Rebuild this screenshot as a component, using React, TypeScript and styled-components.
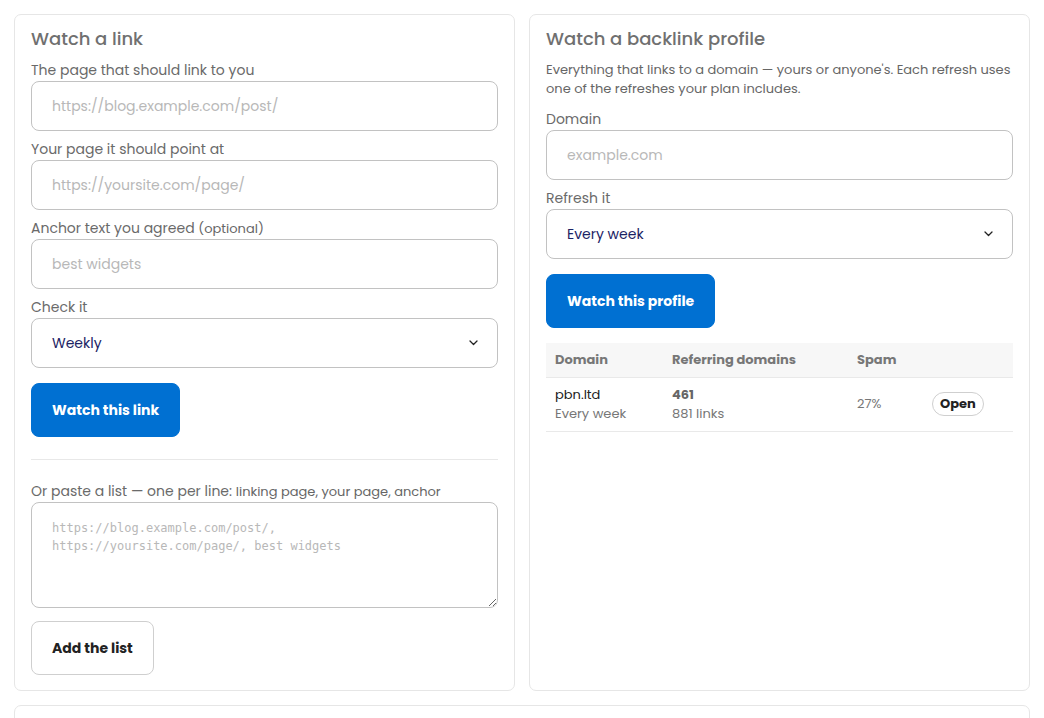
import React from 'react';
import styled, { createGlobalStyle } from 'styled-components';

const GlobalStyle = createGlobalStyle`
  * { box-sizing: border-box; }
  body {
    margin: 0;
    background: #fff;
    font-family: 'Poppins', 'Noto Sans', 'Open Sans', sans-serif;
    color: #333;
  }
`;

const Page = styled.div`
  padding: 14px;
  display: flex;
  flex-direction: column;
  gap: 14px;
`;

const Columns = styled.div`
  display: grid;
  grid-template-columns: 501px 1fr;
  gap: 14px;
`;

const Card = styled.section`
  border: 1px solid #e6e6e6;
  border-radius: 7px;
  padding: 11px 16px 15px;
  background: #fff;
`;

const EmptyCard = styled(Card)`
  height: 40px;
`;

const Title = styled.h2`
  margin: 0 0 8px;
  font-size: 18px;
  font-weight: 500;
  color: #707070;
  line-height: 26px;
`;

const Intro = styled.p`
  margin: 0 0 11px;
  font-size: 13px;
  line-height: 19px;
  color: #666;
`;

const Field = styled.div`
  display: flex;
  flex-direction: column;
  margin-bottom: 8px;
`;

const Label = styled.label`
  font-size: 14px;
  line-height: 20px;
  color: #6a6a6a;
  margin-bottom: 1px;
`;

const Hint = styled.span`
  font-size: 13px;
  line-height: 1;
  color: #666;
`;

const TextInput = styled.input`
  height: 50px;
  border: 1px solid #c2c2c2;
  border-radius: 8px;
  padding: 0 20px;
  font: inherit;
  font-size: 14px;
  color: #222;
  outline: none;
  &::placeholder { color: #b8b8b8; }
`;

const SelectBox = styled.div`
  height: 50px;
  border: 1px solid #c2c2c2;
  border-radius: 8px;
  padding: 0 19px 0 20px;
  display: flex;
  align-items: center;
  justify-content: space-between;
  font-size: 14px;
  color: #1c2364;
`;

const ListArea = styled.textarea`
  height: 106px;
  border: 1px solid #c2c2c2;
  border-radius: 8px;
  padding: 16px 20px;
  font-family: 'DejaVu Sans Mono', 'Liberation Mono', monospace;
  font-size: 12px;
  line-height: 18px;
  color: #222;
  outline: none;
  resize: vertical;
  &::placeholder { color: #b8b8b8; }
`;

const Button = styled.button<{ $primary?: boolean }>`
  height: 54px;
  padding: 0 20px;
  border-radius: 8px;
  font: inherit;
  font-size: 14px;
  font-weight: 700;
  cursor: pointer;
  border: 1px solid ${p => (p.$primary ? '#0070d2' : '#cfcfcf')};
  background: ${p => (p.$primary ? '#0070d2' : '#fff')};
  color: ${p => (p.$primary ? '#fff' : '#222')};
`;

const Actions = styled.div<{ $gap?: number }>`
  display: flex;
  margin-top: ${p => p.$gap ?? 15}px;
`;

const Divider = styled.hr`
  border: 0;
  border-top: 1px solid #e8e8e8;
  margin: 22px 0 21px;
`;

const Table = styled.table`
  width: 100%;
  border-collapse: collapse;
  margin-top: 15px;
  font-size: 13px;
`;

const Th = styled.th<{ $w?: number }>`
  text-align: left;
  background: #f7f7f7;
  color: #777;
  font-weight: 700;
  height: 34px;
  padding: 0 9px;
  border-bottom: 1px solid #e9e9e9;
  width: ${p => (p.$w ? `${p.$w}px` : 'auto')};
`;

const Td = styled.td`
  padding: 7px 9px 8px;
  border-bottom: 1px solid #e9e9e9;
  color: #777;
  line-height: 19px;
  vertical-align: middle;
`;

const Main = styled.div<{ $bold?: boolean }>`
  color: ${p => (p.$bold ? '#666' : '#222')};
  font-weight: ${p => (p.$bold ? 700 : 400)};
`;

const Pill = styled.button`
  font: inherit;
  font-size: 13px;
  font-weight: 700;
  color: #222;
  background: #fff;
  border: 1px solid #cfcfcf;
  border-radius: 12px;
  height: 24px;
  padding: 0 7px;
  cursor: pointer;
`;

const Chevron = () => (
  <svg width="9" height="6" viewBox="0 0 9 6" fill="none">
    <path d="M1 1 4.5 4.5 8 1" stroke="#222" strokeWidth="1.3" strokeLinecap="round" strokeLinejoin="round" />
  </svg>
);

const Select: React.FC<{ value: string }> = ({ value }) => (
  <SelectBox>
    <span>{value}</span>
    <Chevron />
  </SelectBox>
);

export default function App() {
  return (
    <Page>
      <GlobalStyle />
      <Columns>
        <Card>
          <Title>Watch a link</Title>
          <Field>
            <Label>The page that should link to you</Label>
            <TextInput placeholder="https://blog.example.com/post/" />
          </Field>
          <Field>
            <Label>Your page it should point at</Label>
            <TextInput placeholder="https://yoursite.com/page/" />
          </Field>
          <Field>
            <Label>
              Anchor text you agreed <Hint>(optional)</Hint>
            </Label>
            <TextInput placeholder="best widgets" />
          </Field>
          <Field>
            <Label>Check it</Label>
            <Select value="Weekly" />
          </Field>
          <Actions>
            <Button $primary>Watch this link</Button>
          </Actions>
          <Divider />
          <Field>
            <Label>
              Or paste a list — one per line: <Hint>linking page, your page, anchor</Hint>
            </Label>
            <ListArea placeholder={'https://blog.example.com/post/,\nhttps://yoursite.com/page/, best widgets'} />
          </Field>
          <Actions $gap={13}>
            <Button>Add the list</Button>
          </Actions>
        </Card>

        <Card>
          <Title>Watch a backlink profile</Title>
          <Intro>
            Everything that links to a domain — yours or anyone's. Each refresh uses one of the
            refreshes your plan includes.
          </Intro>
          <Field>
            <Label>Domain</Label>
            <TextInput placeholder="example.com" />
          </Field>
          <Field>
            <Label>Refresh it</Label>
            <Select value="Every week" />
          </Field>
          <Actions>
            <Button $primary>Watch this profile</Button>
          </Actions>
          <Table>
            <thead>
              <tr>
                <Th $w={117}>Domain</Th>
                <Th $w={185}>Referring domains</Th>
                <Th $w={75}>Spam</Th>
                <Th />
              </tr>
            </thead>
            <tbody>
              <tr>
                <Td>
                  <Main>pbn.ltd</Main>
                  Every week
                </Td>
                <Td>
                  <Main $bold>461</Main>
                  881 links
                </Td>
                <Td>27%</Td>
                <Td>
                  <Pill>Open</Pill>
                </Td>
              </tr>
            </tbody>
          </Table>
        </Card>
      </Columns>
      <EmptyCard />
    </Page>
  );
}
